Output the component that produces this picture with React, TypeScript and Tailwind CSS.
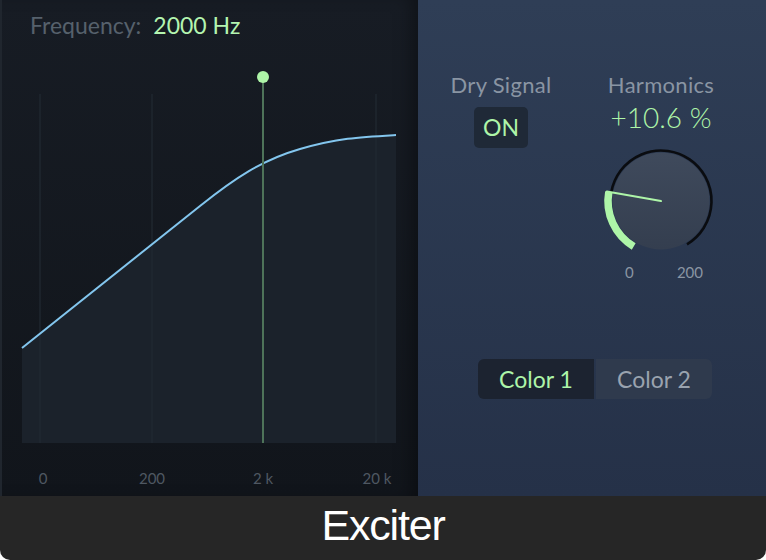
import React from 'react';

const GREEN = '#aef5a8';

// value 10.6 of 200, knob sweeps -150deg .. +150deg
function polar(cx: number, cy: number, r: number, deg: number) {
  const a = ((deg - 90) * Math.PI) / 180;
  return [cx + r * Math.cos(a), cy + r * Math.sin(a)];
}

function arc(cx: number, cy: number, r: number, from: number, to: number) {
  const [x1, y1] = polar(cx, cy, r, from);
  const [x2, y2] = polar(cx, cy, r, to);
  const large = to - from > 180 ? 1 : 0;
  return `M${x1},${y1} A${r},${r} 0 ${large},1 ${x2},${y2}`;
}

const Graph: React.FC = () => {
  const curve = 'M22,348 L200,206 C235,178 262,160 300,149 S360,137 396,135';
  const grid = [40, 152, 376];
  return (
    <svg width="416" height="446" viewBox="2 50 416 446" className="block">
      <path d={`${curve} L396,443 L22,443 Z`} fill="#1b222b" />
      {grid.map((x) => (
        <line key={x} x1={x} y1={94} x2={x} y2={443} stroke="#222a33" strokeWidth="1.2" />
      ))}
      <path d={curve} fill="none" stroke="#83c6ee" strokeWidth="2" />
      <line x1="263" y1="77" x2="263" y2="443" stroke="#4e7359" strokeWidth="2" />
      <circle cx="263" cy="77" r="6" fill={GREEN} />
      <g fill="#4f5862" fontSize="15" fontFamily="Lato, 'Noto Sans', sans-serif" textAnchor="middle">
        <text x="43" y="484">0</text>
        <text x="152" y="484">200</text>
        <text x="263" y="484">2 k</text>
        <text x="377" y="484">20 k</text>
      </g>
    </svg>
  );
};

const Knob: React.FC = () => {
  const cx = 61;
  const cy = 56;
  const val = -80;
  const [lx, ly] = polar(cx, cy, 55, val);
  return (
    <svg width="122" height="116" viewBox="0 0 122 116" className="block">
      <defs>
        <linearGradient id="kb" x1="0" y1="0" x2="0" y2="1">
          <stop offset="0" stopColor="#3f4a5c" />
          <stop offset="1" stopColor="#343e4f" />
        </linearGradient>
      </defs>
      <circle cx={cx} cy={cy} r="48.5" fill="url(#kb)" />
      <path d={arc(cx, cy, 50.5, val, 149)} fill="none" stroke="#0a0c10" strokeWidth="2.6" />
      <path d={arc(cx, cy, 53, -149, val)} fill="none" stroke={GREEN} strokeWidth="7.5" />
      <line x1={cx} y1={cy} x2={lx} y2={ly} stroke={GREEN} strokeWidth="2" strokeLinecap="round" />
    </svg>
  );
};

export default function App() {
  return (
    <div className="w-[766px] h-[560px] bg-white font-['Lato','Noto_Sans',sans-serif]">
      <div className="flex h-[496px]">
        <div className="w-[418px] flex flex-col bg-gradient-to-b from-[#171c24] to-[#11151b] border-l-2 border-[#20262e] shadow-[inset_-14px_0_18px_-8px_rgba(0,0,0,0.35)]">
          <div className="h-[50px] pl-[28px] pt-[11px] flex items-start gap-[12px] text-[23px] leading-[28px]">
            <span className="text-[#56616c]">Frequency:</span>
            <span className="text-[#b4f5b0]">2000 Hz</span>
          </div>
          <Graph />
        </div>
        <div className="flex-1 bg-gradient-to-b from-[#2f3e56] to-[#253148]">
          <div className="flex pl-[22px] gap-[38px] pt-[72px]">
            <div className="w-[122px] flex flex-col items-center">
              <div className="text-[22px] leading-[26px] tracking-[0.3px] text-[#8a95a3]">Dry Signal</div>
              <div className="mt-[9px] w-[54px] h-[41px] rounded-[5px] bg-[#1f2937] flex items-center justify-center text-[23px] text-[#aef5a8]">
                ON
              </div>
            </div>
            <div className="w-[122px] flex flex-col items-center">
              <div className="text-[22px] leading-[26px] tracking-[0.3px] text-[#8a95a3]">Harmonics</div>
              <div className="mt-[3px] text-[28px] leading-[32px] font-light text-[#aef5a8]">+10.6 %</div>
              <div className="mt-[12px]">
                <Knob />
              </div>
              <div className="flex w-[100px] justify-between pl-[14px] pr-[8px] mt-[2px] text-[15px] leading-[18px] text-[#8a95a3]">
                <span>0</span>
                <span>200</span>
              </div>
            </div>
          </div>
          <div className="ml-[60px] mt-[78px] w-[234px] h-[40px] flex rounded-[6px] overflow-hidden text-[23px]">
            <div className="w-[116px] bg-[#1c2330] text-[#aef5a8] flex items-center justify-center">Color 1</div>
            <div className="flex-1 bg-[#2f3a4d] text-[#9aa3af] flex items-center justify-center ml-[2px]">Color 2</div>
          </div>
        </div>
      </div>
      <div className="h-[64px] bg-[#262626] rounded-b-[10px] flex items-center justify-center pb-[6px]">
        <span className="text-white text-[43px] leading-none font-['Liberation_Sans',Arial,sans-serif] tracking-[-1.2px]">
          Exciter
        </span>
      </div>
    </div>
  );
}
